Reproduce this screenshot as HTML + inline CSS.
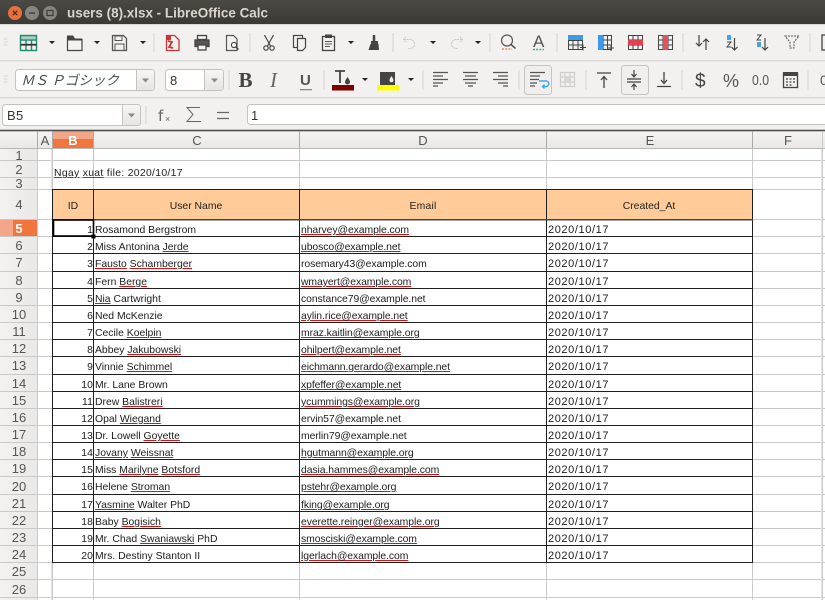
<!DOCTYPE html>
<html><head><meta charset="utf-8"><style>
html,body{margin:0;padding:0;background:#fff}
#p{position:relative;width:825px;height:600px;overflow:hidden;background:#fff;font-family:"Liberation Sans","Noto Sans CJK JP",sans-serif;color:#1c1c1c;filter:blur(.3px)}
svg{position:absolute;left:0;top:0}
.r{position:absolute;left:53px;width:700px;height:17px;font-size:10.4px;line-height:17px;white-space:nowrap}
.r span{position:absolute;top:2px}
.a{right:660px;left:auto;letter-spacing:.1px}
.n{left:42px}
.e{left:248px;letter-spacing:-.07px}
.d{left:495px;font-size:11px;letter-spacing:.6px}
u{text-decoration:underline #e01010 1px;text-underline-offset:1px}
</style></head><body><div id="p">
<svg width="825" height="600" viewBox="0 0 825 600" font-family="Liberation Sans,Noto Sans CJK JP,sans-serif">
<defs>
<linearGradient id="tb" x1="0" y1="0" x2="0" y2="1"><stop offset="0" stop-color="#4a4944"/><stop offset="1" stop-color="#3a3935"/></linearGradient>
<linearGradient id="ch" x1="0" y1="0" x2="0" y2="1"><stop offset="0" stop-color="#f6f5f4"/><stop offset="1" stop-color="#e8e7e5"/></linearGradient>
<linearGradient id="rh" x1="0" y1="0" x2="1" y2="0"><stop offset="0" stop-color="#f3f2f1"/><stop offset="1" stop-color="#e9e8e6"/></linearGradient>
<linearGradient id="dd" x1="0" y1="0" x2="0" y2="1"><stop offset="0" stop-color="#f6f5f4"/><stop offset="1" stop-color="#e6e5e3"/></linearGradient>
</defs>
<rect width="825" height="130" fill="#f2f1f0"/>
<rect width="825" height="24" fill="url(#tb)"/>
<circle cx="15" cy="13" r="7" fill="#e8703f"/><path d="M12.800 10.800l4.400 4.400M17.200 10.800l-4.400 4.400" stroke="#5a2a15" stroke-width="1.300"/>
<circle cx="32" cy="13" r="7" fill="#85847f"/><rect x="29" y="12.300" width="6" height="1.400" fill="#3f3e3a"/>
<circle cx="50" cy="13" r="7" fill="#85847f"/><rect x="47" y="10.500" width="6" height="5" fill="none" stroke="#3f3e3a" stroke-width="1.200"/>
<text x="67" y="17.500" font-size="13.500" font-weight="bold" fill="#d9d5cc" textLength="201" lengthAdjust="spacingAndGlyphs">users (8).xlsx - LibreOffice Calc</text>
<rect y="24" width="825" height="1" fill="#d8d6d2"/>
<rect y="60" width="825" height="1.500" fill="#dcdad7"/>
<rect y="97" width="825" height="1.500" fill="#dcdad7"/>
<!-- grips -->
<path d="M3.500 39h4M3.500 42h4M3.500 45h4M3.500 76h4M3.500 79h4M3.500 82h4" stroke="#d5d3cf"/>
<!-- separators -->
<path d="M154 33v19M250 33v19M393 33v19M490 33v19M557 33v19M683 33v19M810 33v19M229 70v20M324 70v20M423 70v20M519 70v20M586 70v20M682 70v20M808 70v20M146 106v18" stroke="#d6d4d0"/>
<!-- dropdown arrows -->
<path d="M49 41h6l-3 3zM94 41h6l-3 3zM140 41h6l-3 3zM348 41h6l-3 3zM430 41h6l-3 3zM475 41h6l-3 3zM362 78h6l-3 3zM408 78h6l-3 3z" fill="#222"/>
<!-- new sheet -->
<g fill="none" stroke="#1f8a70" stroke-width="1.400"><rect x="20.500" y="35.500" width="16" height="15"/><path d="M20.500 40h16M20.500 44.500h16M26 40v10M31.500 40v10"/></g><rect x="20" y="35" width="17" height="4" fill="#1f8a70" opacity=".35"/><rect x="20.500" y="44" width="16" height="1.600" fill="#333"/>
<!-- open -->
<path d="M67.500 37v13.500h14.500V39.500H74l-1.500-2.500z" fill="#f4f3f1" stroke="#444" stroke-width="1.200"/><path d="M67 35.500h6l2 3h7v2H67z" fill="#444"/>
<!-- save -->
<path d="M112.500 35.500h11l3 3v12h-14z" fill="none" stroke="#555" stroke-width="1.300"/><rect x="115" y="36" width="7" height="4.500" fill="none" stroke="#555"/><rect x="115" y="44" width="9" height="6.500" fill="none" stroke="#555"/>
<!-- pdf -->
<path d="M166.500 35.500h8l4.500 4.500v10.500h-12.500z" fill="none" stroke="#c8363a" stroke-width="1.300"/><path d="M168 41l4 1-3 5 4 1" fill="none" stroke="#c8363a" stroke-width="1.800"/><rect x="166" y="35" width="5" height="5" fill="#c8363a"/>
<!-- print -->
<g fill="none" stroke="#444" stroke-width="1.300"><rect x="197.500" y="35.500" width="9" height="4"/><rect x="195" y="40" width="14" height="6.500" fill="#555"/><rect x="198" y="45" width="8" height="5" fill="#f2f1f0"/></g>
<!-- preview -->
<path d="M226.500 35.500h7l3.500 3.500v11.500h-10.500z" fill="none" stroke="#555" stroke-width="1.200"/><circle cx="234" cy="45" r="2.600" fill="none" stroke="#444" stroke-width="1.100"/><path d="M236 47l2.500 2.500" stroke="#444" stroke-width="1.300"/>
<!-- cut -->
<g fill="none" stroke="#444" stroke-width="1.200"><path d="M264.500 35l6 11M273.500 35l-6 11"/><circle cx="266" cy="48" r="2.200"/><circle cx="272" cy="48" r="2.200"/></g>
<!-- copy -->
<g fill="none" stroke="#444" stroke-width="1.200"><rect x="293.500" y="35.500" width="9" height="12"/><path d="M297.500 38.500h8v9l-3 3h-5z" fill="#f2f1f0"/></g>
<!-- paste -->
<rect x="322.500" y="36.500" width="12" height="14" fill="none" stroke="#444" stroke-width="1.300"/><rect x="325" y="34.500" width="7" height="3.500" fill="#444"/><path d="M325 41.500h7M325 44h7M325 46.500h5" stroke="#555"/>
<!-- clone -->
<path d="M374 35v6" stroke="#444" stroke-width="2.500"/><path d="M371 41h7v3h-7z" fill="#444"/><path d="M370.500 44h8l.5 6h-10.500z" fill="#444"/>
<!-- undo redo -->
<path d="M406 37l-2.500 2.500 2.500 2.500M404 39.500h6a4.500 4.500 0 0 1 0 9h-2" fill="none" stroke="#c9c8c5" stroke-width="1.100" stroke-dasharray="2 .8"/>
<path d="M460 37l2.500 2.500-2.500 2.500M462 39.500h-6a4.500 4.500 0 0 0 0 9h2" fill="none" stroke="#c9c8c5" stroke-width="1.100" stroke-dasharray="2 .8"/>
<!-- find -->
<circle cx="507" cy="40.500" r="5.500" fill="none" stroke="#555" stroke-width="1.200"/><path d="M511 44.500l4.500 4" stroke="#444" stroke-width="1.500"/><path d="M502 49h10" stroke="#f08a60" stroke-width="1.500" stroke-dasharray="2 1.200"/>
<!-- A -->
<text x="533" y="47" font-size="17" fill="#555">A</text><path d="M533 49.500h11" stroke="#45b070" stroke-width="1.500" stroke-dasharray="2 1.200"/>
<!-- table icons -->
<g fill="none" stroke="#444" stroke-width="1"><path d="M568.500 35.500h14v14h-14zM568.500 40.500h14M568.500 45h14M573 35.500v14M578 35.500v14"/></g><rect x="568" y="35" width="15" height="5" fill="#3d9ae8"/><path d="M580 47.500h6M583 44.500v6" stroke="#444"/>
<g fill="none" stroke="#444" stroke-width="1"><path d="M598.500 35.500h13v14h-13zM598.500 40h13M598.500 45h13M603 35.500v14M607.500 35.500v14"/></g><rect x="598" y="35" width="5" height="15" fill="#3d9ae8"/><path d="M608 48h6M611 45v6" stroke="#444"/>
<g fill="none" stroke="#444" stroke-width="1"><path d="M628.500 35.500h14v14h-14zM628.500 40h14M628.500 45h14M633 35.500v14M638 35.500v14"/></g><rect x="628" y="40" width="15" height="5" fill="#e04050"/>
<g fill="none" stroke="#444" stroke-width="1"><path d="M658.500 35.500h14v14h-14zM658.500 40h14M658.500 45h14M663 35.500v14M668 35.500v14"/></g><rect x="663" y="35" width="5" height="15" fill="#e85060"/>
<!-- sort -->
<g fill="none" stroke="#444" stroke-width="1.200"><path d="M699 35v11M696 43l3 3 3-3M706 39v11M703 42l3-3 3 3"/><path d="M734.500 38v12M731.500 47l3 3 3-3M765 38v12M762 47l3 3 3-3"/></g>
<rect x="727" y="35" width="4" height="5" fill="#4aa0e8"/><path d="M727 42h4l-4 5h4" fill="none" stroke="#444"/>
<path d="M757 35h4l-4 5h4" fill="none" stroke="#444"/><rect x="757" y="42" width="4" height="5" fill="#4aa0e8"/>
<!-- filter -->
<path d="M785 36h14l-5 6v6h-4v-6z" fill="none" stroke="#555" stroke-dasharray="2 1"/>
<rect x="822" y="35" width="5" height="15" fill="none" stroke="#444" stroke-width="1.300"/>
<!-- formatting row -->
<rect x="15.500" y="69.500" width="139" height="21" rx="3" fill="#fff" stroke="#c4c2be"/><path d="M136.500 70v20" stroke="#c4c2be"/><rect x="137" y="70" width="17" height="20" rx="2" fill="url(#dd)"/><path d="M142 78.500h7l-3.500 4z" fill="#888"/>
<text x="21" y="85" font-size="13.500" font-style="italic" fill="#4a4a55" textLength="98" lengthAdjust="spacing" font-family="Noto Sans CJK JP,sans-serif">ＭＳ Ｐゴシック</text>
<rect x="165.500" y="69.500" width="58" height="21" rx="3" fill="#fff" stroke="#c4c2be"/><path d="M204.500 70v20" stroke="#c4c2be"/><rect x="205" y="70" width="18" height="20" rx="2" fill="url(#dd)"/><path d="M211 78.500h7l-3.500 4z" fill="#888"/>
<text x="170" y="85" font-size="13" fill="#333">8</text>
<text x="238.500" y="87" font-size="21" font-weight="bold" font-family="Liberation Serif,serif" fill="#444">B</text>
<text x="270" y="87" font-size="21" font-style="italic" font-family="Liberation Serif,serif" fill="#666">I</text>
<text x="300" y="85" font-size="15" font-weight="bold" fill="#555">U</text><rect x="300" y="89" width="12" height="1.300" fill="#888"/>
<path d="M335 71h10M340 71v12" stroke="#444" stroke-width="1.800"/><path d="M347.500 77c2 3 2.500 4 2.500 5a2.500 2.500 0 0 1-5 0c0-1 .5-2 2.500-5z" fill="#444"/><rect x="332" y="85" width="22" height="5.500" fill="#7d0000"/>
<rect x="380" y="72" width="15" height="13" fill="#444"/><path d="M391.500 76c1.500 2.500 2 3.200 2 4.200a2 2 0 0 1-4 0c0-1 .5-1.700 2-4.200z" fill="#eee"/><rect x="377" y="85" width="22" height="5.500" fill="#ffff00"/>
<g stroke="#555" stroke-width="1.300"><path d="M433 72.500h15M433 76h10M433 79.500h15M433 83h10M433 86h5"/><path d="M463 72.500h15M465 76h11M463 79.500h15M465 83h11M468 86h5"/><path d="M493 72.500h15M498 76h10M493 79.500h15M498 83h10M503 86h5"/></g>
<rect x="524.500" y="65.500" width="27" height="29" rx="3" fill="#f0efee" stroke="#c6c4c0"/>
<g stroke="#555" stroke-width="1.300"><path d="M530 72.500h15M530 76h10M530 79.500h9M530 83h7M530 86h5"/></g><path d="M539 81h7a2.500 2.500 0 0 1 0 5.500h-3M544.500 84.500l-2 2 2 2" fill="none" stroke="#3da5ea" stroke-width="1.400"/>
<g fill="none" stroke="#cfcecb" stroke-width="1.200"><path d="M560.500 72.500h14v14h-14zM560.500 77h14M560.500 82h14M565 72.500v14M570 72.500v14"/></g><rect x="564" y="76" width="7" height="7" fill="#d8d7d4"/>
<path d="M597 73h14M604 88v-11M601 80l3-3.500 3 3.500" fill="none" stroke="#444" stroke-width="1.300"/>
<rect x="621.500" y="65.500" width="27" height="29" rx="3" fill="#f0efee" stroke="#c6c4c0"/>
<path d="M627 79h14M627 82h14M634 70v7M631.500 74l2.500 3 2.500-3M634 90v-6M631.500 87l2.500-3 2.500 3" fill="none" stroke="#444" stroke-width="1.200"/>
<path d="M657 86.500h14M664 72v11M661 80l3 3.500 3-3.500" fill="none" stroke="#444" stroke-width="1.300"/>
<text x="695" y="87" font-size="19" fill="#444">$</text>
<text x="723" y="87" font-size="18" fill="#555">%</text>
<text x="752" y="85" font-size="14.500" fill="#555" textLength="17" lengthAdjust="spacingAndGlyphs">0.0</text>
<rect x="783.500" y="73.500" width="14" height="14" fill="none" stroke="#444" stroke-width="1.300"/><rect x="783" y="72" width="15" height="4" fill="#444"/><path d="M786 79h2M789.500 79h2M793 79h2M786 82h2M789.500 82h2M793 82h2M786 85h2M789.500 85h2" stroke="#444" stroke-width="1.300"/>
<text x="820" y="85" font-size="13.500" fill="#555">0</text>
<!-- formula row -->
<rect x="2.500" y="104.500" width="138" height="21" rx="3" fill="#fff" stroke="#c4c2be"/><path d="M122.500 105v20" stroke="#c4c2be"/><rect x="123" y="105" width="17" height="20" rx="2" fill="url(#dd)"/><path d="M128 113.500h7l-3.500 4z" fill="#888"/>
<text x="7" y="120" font-size="13" fill="#333" letter-spacing=".3">B5</text>
<text x="158" y="121" font-size="15" fill="#666" font-family="DejaVu Sans,sans-serif">f</text><text x="165" y="122" font-size="9" fill="#666">×</text>
<path d="M200 107.500h-13l6 7-6 7h14" fill="none" stroke="#666" stroke-width="1"/>
<path d="M217 112.500h12M217 118.500h12" stroke="#666" stroke-width="1.300"/>
<rect x="247.500" y="104.500" width="590" height="20" rx="3" fill="#fff" stroke="#c4c2be"/>
<text x="251" y="120" font-size="13" fill="#333">1</text>
<rect y="129" width="825" height="1" fill="#c4c3c0"/>
<!-- column header -->
<rect y="130" width="825" height="18" fill="url(#ch)"/>
<rect x="53" y="131" width="40" height="9" fill="#f4a689"/><rect x="53" y="139" width="40" height="9" fill="#ef773f"/>
<rect y="130" width="825" height="1.300" fill="#4e4d4a"/>
<rect y="148" width="825" height="1" fill="#b8b7b4"/>
<path d="M37.500 131v469M52.500 131v17M93.500 131v17M299.500 131v17M546.500 131v17M752.500 131v17M822.500 131v17" stroke="#aaa" stroke-width="1"/>
<g font-size="13" text-anchor="middle" fill="#555"><text x="45" y="145">A</text><text x="73" y="145" fill="#fff" font-weight="bold">B</text><text x="197" y="145">C</text><text x="423" y="145">D</text><text x="650" y="145">E</text><text x="788" y="145">F</text></g>
<!-- row header -->
<rect y="149" width="37" height="451" fill="url(#rh)"/>
<rect y="219" width="37" height="17" fill="#ef773f"/><rect y="219" width="13" height="17" fill="#f4a689"/>
<!-- grid lines -->
<path d="M0 160.500h825M0 177.500h825M0 189.500h825M0 219.500h825M0 236.500h825M0 253.500h825M0 271.500h825M0 288.500h825M0 305.500h825M0 322.500h825M0 339.500h825M0 356.500h825M0 374.500h825M0 391.500h825M0 408.500h825M0 425.500h825M0 442.500h825M0 459.500h825M0 476.500h825M0 494.500h825M0 511.500h825M0 528.500h825M0 545.500h825M0 562.500h825M0 579.500h825M0 597.500h825" stroke="#c9c9c9"/>
<path d="M37.500 149v451M52.500 149v451M93.500 149v451M299.500 149v451M546.500 149v451M752.500 149v451M822.500 131v469" stroke="#c9c9c9"/>
<path d="M51.500 149v40M51.500 563v37M821.500 149v451" stroke="#e2e2e2"/>
<!-- header fill -->
<rect x="53" y="189" width="700" height="31" fill="#ffcc99"/>
<!-- table borders -->
<path d="M53 236.500h700M53 253.500h700M53 271.500h700M53 288.500h700M53 305.500h700M53 322.500h700M53 339.500h700M53 356.500h700M53 374.500h700M53 391.500h700M53 408.500h700M53 425.500h700M53 442.500h700M53 459.500h700M53 476.500h700M53 494.500h700M53 511.500h700M53 528.500h700M53 545.500h700" stroke="#1f1f1f"/>
<path d="M52.500 189v374M93.500 189v374M299.500 189v374M546.500 189v374M752.500 189v374M52 189.500h701M52 562.500h701" stroke="#1f1f1f"/>
<rect x="53" y="219" width="700" height="1.500" fill="#444"/>
<!-- cell cursor -->
<rect x="53.500" y="220" width="40" height="16" fill="#fff" stroke="#000" stroke-width="1.600"/><rect x="91.500" y="234.500" width="4" height="4" fill="#000"/>
<!-- row numbers -->
<g font-size="13" text-anchor="middle" fill="#555">
<text x="19" y="160">1</text><text x="19" y="174">2</text><text x="19" y="188">3</text><text x="19" y="209">4</text><text x="19" y="233" fill="#fff" font-weight="bold">5</text>
<text x="19" y="250">6</text><text x="19" y="267">7</text><text x="19" y="285">8</text><text x="19" y="302">9</text><text x="19" y="319">10</text><text x="19" y="336">11</text><text x="19" y="353">12</text><text x="19" y="370">13</text><text x="19" y="388">14</text><text x="19" y="405">15</text><text x="19" y="422">16</text><text x="19" y="439">17</text><text x="19" y="456">18</text><text x="19" y="473">19</text><text x="19" y="491">20</text><text x="19" y="508">21</text><text x="19" y="525">22</text><text x="19" y="542">23</text><text x="19" y="559">24</text><text x="19" y="576">25</text><text x="19" y="594">26</text>
</g>
<g font-size="10.400" text-anchor="middle" fill="#222"><text x="73" y="209">ID</text><text x="196" y="209">User Name</text><text x="423" y="209" letter-spacing=".2">Email</text><text x="649" y="209">Created_At</text></g>
</svg>
<div class="r" style="top:163px"><span style="left:1px;letter-spacing:.31px"><u>Ngay</u> <u>xuat</u> file: 2020/10/17</span></div>
<div class="r" style="top:220px"><span class="a">1</span><span class="n">Rosamond Bergstrom</span><span class="e"><u>nharvey@example.com</u></span><span class="d">2020/10/17</span></div>
<div class="r" style="top:237px"><span class="a">2</span><span class="n">Miss Antonina <u>Jerde</u></span><span class="e"><u>ubosco@example.net</u></span><span class="d">2020/10/17</span></div>
<div class="r" style="top:254px"><span class="a">3</span><span class="n"><u>Fausto</u> <u>Schamberger</u></span><span class="e">rosemary43@example.com</span><span class="d">2020/10/17</span></div>
<div class="r" style="top:272px"><span class="a">4</span><span class="n">Fern <u>Berge</u></span><span class="e"><u>wmayert@example.com</u></span><span class="d">2020/10/17</span></div>
<div class="r" style="top:289px"><span class="a">5</span><span class="n"><u>Nia</u> Cartwright</span><span class="e">constance79@example.net</span><span class="d">2020/10/17</span></div>
<div class="r" style="top:306px"><span class="a">6</span><span class="n">Ned McKenzie</span><span class="e"><u>aylin.rice@example.net</u></span><span class="d">2020/10/17</span></div>
<div class="r" style="top:323px"><span class="a">7</span><span class="n">Cecile <u>Koelpin</u></span><span class="e"><u>mraz.kaitlin@example.org</u></span><span class="d">2020/10/17</span></div>
<div class="r" style="top:340px"><span class="a">8</span><span class="n">Abbey <u>Jakubowski</u></span><span class="e"><u>ohilpert@example.net</u></span><span class="d">2020/10/17</span></div>
<div class="r" style="top:357px"><span class="a">9</span><span class="n">Vinnie <u>Schimmel</u></span><span class="e"><u>eichmann.gerardo@example.net</u></span><span class="d">2020/10/17</span></div>
<div class="r" style="top:375px"><span class="a">10</span><span class="n">Mr. Lane Brown</span><span class="e"><u>xpfeffer@example.net</u></span><span class="d">2020/10/17</span></div>
<div class="r" style="top:392px"><span class="a">11</span><span class="n">Drew <u>Balistreri</u></span><span class="e"><u>ycummings@example.org</u></span><span class="d">2020/10/17</span></div>
<div class="r" style="top:409px"><span class="a">12</span><span class="n">Opal <u>Wiegand</u></span><span class="e">ervin57@example.net</span><span class="d">2020/10/17</span></div>
<div class="r" style="top:426px"><span class="a">13</span><span class="n">Dr. Lowell <u>Goyette</u></span><span class="e">merlin79@example.net</span><span class="d">2020/10/17</span></div>
<div class="r" style="top:443px"><span class="a">14</span><span class="n"><u>Jovany</u> <u>Weissnat</u></span><span class="e"><u>hgutmann@example.org</u></span><span class="d">2020/10/17</span></div>
<div class="r" style="top:460px"><span class="a">15</span><span class="n">Miss <u>Marilyne</u> <u>Botsford</u></span><span class="e"><u>dasia.hammes@example.com</u></span><span class="d">2020/10/17</span></div>
<div class="r" style="top:477px"><span class="a">16</span><span class="n">Helene <u>Stroman</u></span><span class="e"><u>pstehr@example.org</u></span><span class="d">2020/10/17</span></div>
<div class="r" style="top:495px"><span class="a">17</span><span class="n"><u>Yasmine</u> Walter PhD</span><span class="e"><u>fking@example.org</u></span><span class="d">2020/10/17</span></div>
<div class="r" style="top:512px"><span class="a">18</span><span class="n">Baby <u>Bogisich</u></span><span class="e"><u>everette.reinger@example.org</u></span><span class="d">2020/10/17</span></div>
<div class="r" style="top:529px"><span class="a">19</span><span class="n">Mr. Chad <u>Swaniawski</u> PhD</span><span class="e"><u>smosciski@example.com</u></span><span class="d">2020/10/17</span></div>
<div class="r" style="top:546px"><span class="a">20</span><span class="n">Mrs. Destiny Stanton II</span><span class="e"><u>lgerlach@example.com</u></span><span class="d">2020/10/17</span></div>
</div></body></html>
